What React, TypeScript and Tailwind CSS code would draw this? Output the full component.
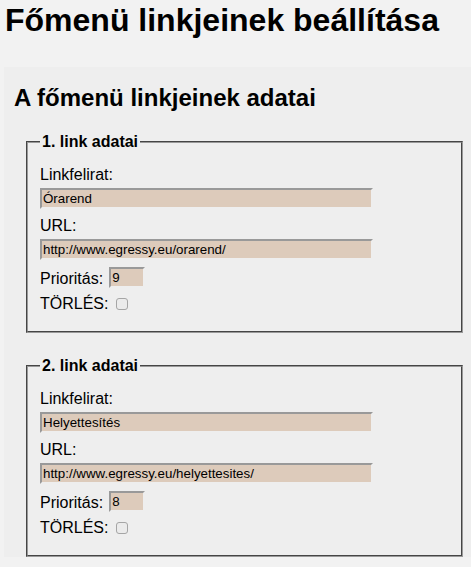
import React from 'react'

interface LinkData {
  n: number
  caption: string
  url: string
  priority: string
}

const links: LinkData[] = [
  { n: 1, caption: 'Órarend', url: 'http://www.egressy.eu/orarend/', priority: '9' },
  { n: 2, caption: 'Helyettesítés', url: 'http://www.egressy.eu/helyettesites/', priority: '8' },
]

const inputCls =
  "h-[21px] border-2 border-t-[#999] border-l-[#999] border-r-[#eee] border-b-[#eee] bg-[#ddcbbb] px-px text-[13.33px] text-black font-['Liberation_Sans',Arial,sans-serif] outline-none"

function LinkFieldset({ link }: { link: LinkData }) {
  return (
    <fieldset className="ml-[22px] mr-[8px] mb-[23px] border-2 border-[#999] [border-style:groove] px-3 pt-[14px] pb-[18px]">
      <legend className="px-0.5 text-[16px] leading-[20px] font-bold">{link.n}. link adatai</legend>
      <div className="text-[16px] leading-[18px]">Linkfelirat:</div>
      <input className={`${inputCls} mt-[4.5px] block w-[333px]`} defaultValue={link.caption} />
      <div className="mt-[7.5px] text-[16px] leading-[18px]">URL:</div>
      <input className={`${inputCls} mt-[4.5px] block w-[333px]`} defaultValue={link.url} />
      <div className="mt-[6.7px] flex items-end text-[16px] leading-[18px]">
        <span>Prioritás:</span>
        <input className={`${inputCls} ml-[6px] w-[36px]`} defaultValue={link.priority} />
      </div>
      <div className="mt-[7px] flex items-center text-[16px] leading-[18px]">
        <span>TÖRLÉS:</span>
        <input
          type="checkbox"
          className="ml-[8px] mt-px h-[12px] w-[12px] appearance-none rounded-[3px] border border-[#a5a5a5] bg-[#ebebeb]"
        />
      </div>
    </fieldset>
  )
}

export default function App() {
  return (
    <div className="min-h-[567px] bg-[#f2f2f2] px-1 pt-[2px] text-black font-['Liberation_Sans',Arial,sans-serif]">
      <h1 className="pl-px text-[32px] leading-[36px] font-bold">Főmenü linkjeinek beállítása</h1>
      <div className="mt-[29px] mr-[-4px] bg-[#eeeeee] pt-[17px]">
        <h2 className="pl-[10px] text-[24px] leading-[28px] font-bold">A főmenü linkjeinek adatai</h2>
        <div className="mt-[19.5px]">
          {links.map((l) => (
            <LinkFieldset key={l.n} link={l} />
          ))}
        </div>
      </div>
    </div>
  )
}
